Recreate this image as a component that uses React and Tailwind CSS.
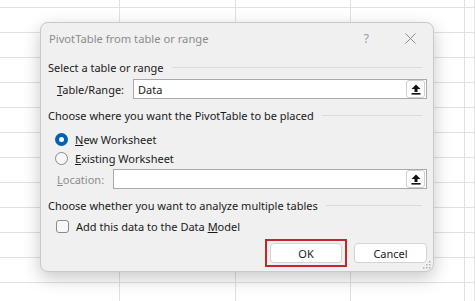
import React from 'react'

const COLS = ['w-[120px]', 'w-[116px]', 'w-[115px]', 'w-[114px]', 'flex-1']

function SheetGrid() {
  const rows = Array.from({ length: 13 })
  return (
    <div className="flex flex-col">
      {rows.map((_, r) => (
        <div key={r} className={`flex ${r === 0 ? 'h-[8px]' : 'h-[25px]'}`}>
          {COLS.map((c, i) => (
            <div key={i} className={`${c} shrink-0 border-r border-b border-[#e1e1e1]`} />
          ))}
        </div>
      ))}
    </div>
  )
}

function PickButton() {
  return (
    <div className="w-[19px] h-[18px] mr-[1px] bg-white border border-[#cfcfcf] rounded-[3px] flex items-center justify-center">
      <svg width="10" height="11" viewBox="0 0 10 11">
        <path d="M5 0.5 L9.5 5 L6.5 5 L6.5 8 L3.5 8 L3.5 5 L0.5 5 Z" fill="#111" />
        <rect x="0.5" y="9" width="9" height="1.6" fill="#111" />
      </svg>
    </div>
  )
}

function Heading({ children }) {
  return (
    <div className="h-[20px] flex items-center gap-[8px] pr-[5px]">
      <span className="text-[#1a1a1a] whitespace-nowrap">{children}</span>
      <div className="flex-1 h-px bg-[#dadada]" />
    </div>
  )
}

function Radio({ checked }) {
  if (checked) {
    return (
      <div className="w-[13px] h-[13px] rounded-full bg-[#005fb8] flex items-center justify-center">
        <div className="w-[5px] h-[5px] rounded-full bg-white" />
      </div>
    )
  }
  return <div className="w-[13px] h-[13px] rounded-full border border-[#8a8a8a] bg-[#f7f7f7]" />
}

export default function App() {
  return (
    <div
      className="relative w-[475px] h-[301px] overflow-hidden bg-white text-[11px] leading-none"
      style={{ fontFamily: '"Noto Sans", "Open Sans", sans-serif' }}
    >
      <SheetGrid />

      {/* dialog */}
      <div className="absolute left-[40px] top-[22px] w-[394px] h-[250px] bg-[#f0f0f0] border border-[#c9c9c9] rounded-[8px] shadow-[0_6px_18px_rgba(0,0,0,0.22)] pl-[7px] pr-[6px] flex flex-col">
        {/* title bar */}
        <div className="h-[31px] flex items-center pl-[1px]">
          <span className="text-[#8c8c8c] text-[11.2px]">PivotTable from table or range</span>
          <span className="ml-auto mr-[36px] text-[#9a9a9a] text-[12px]">?</span>
          <svg width="11" height="11" viewBox="0 0 11 11" className="mr-[11px]">
            <path d="M0.5 0.5 L10.5 10.5 M10.5 0.5 L0.5 10.5" stroke="#8c8c8c" strokeWidth="1" />
          </svg>
        </div>

        <div className="mt-[3px]">
          <Heading>Select a table or range</Heading>
        </div>

        <div className="mt-[2px] flex items-center pl-[9px]">
          <span className="w-[76px] text-[#1a1a1a]"><span className="underline">T</span>able/Range:</span>
          <div className="flex-1 h-[20px] bg-white border border-[#a9a9a9] flex items-center pl-[4px]">
            <span className="flex-1 text-[#1a1a1a]">Data</span>
            <PickButton />
          </div>
        </div>

        <div className="mt-[6px]">
          <Heading>Choose where you want the PivotTable to be placed</Heading>
        </div>

        <div className="mt-[5px] h-[18px] flex items-center gap-[7px] pl-[7px]">
          <Radio checked />
          <span className="text-[#1a1a1a]"><span className="underline">N</span>ew Worksheet</span>
        </div>
        <div className="mt-[1px] h-[18px] flex items-center gap-[7px] pl-[7px]">
          <Radio />
          <span className="text-[#1a1a1a]"><span className="underline">E</span>xisting Worksheet</span>
        </div>

        <div className="mt-[2px] flex items-center pl-[9px]">
          <span className="w-[56px] text-[#8c8c8c]"><span className="underline">L</span>ocation:</span>
          <div className="flex-1 h-[20px] bg-white border border-[#a9a9a9] flex items-center justify-end">
            <PickButton />
          </div>
        </div>

        <div className="mt-[6px]">
          <Heading>Choose whether you want to analyze multiple tables</Heading>
        </div>

        <div className="mt-[2px] h-[18px] flex items-center gap-[7px] pl-[8px]">
          <div className="w-[13px] h-[13px] rounded-[3px] border border-[#8a8a8a] bg-[#f7f7f7]" />
          <span className="text-[#1a1a1a]">Add this data to the Data <span className="underline">M</span>odel</span>
        </div>

        <div className="mt-[4px] flex items-center justify-end gap-[7px]">
          <div className="border-2 border-[#c4262e] px-[3px] py-[2px]">
            <button className="w-[72px] h-[20px] bg-white border border-[#d3d3d3] rounded-[4px] text-[#1a1a1a] flex items-center justify-center">OK</button>
          </div>
          <button className="w-[73px] h-[20px] bg-white border border-[#d3d3d3] rounded-[4px] text-[#1a1a1a] flex items-center justify-center">Cancel</button>
        </div>

        <svg width="8" height="8" viewBox="0 0 8 8" className="absolute right-[2px] bottom-[2px]">
          <rect x="6" y="0" width="1.5" height="1.5" fill="#b0b0b0" />
          <rect x="3" y="3" width="1.5" height="1.5" fill="#b0b0b0" />
          <rect x="6" y="3" width="1.5" height="1.5" fill="#b0b0b0" />
          <rect x="0" y="6" width="1.5" height="1.5" fill="#b0b0b0" />
          <rect x="3" y="6" width="1.5" height="1.5" fill="#b0b0b0" />
          <rect x="6" y="6" width="1.5" height="1.5" fill="#b0b0b0" />
        </svg>
      </div>
    </div>
  )
}
